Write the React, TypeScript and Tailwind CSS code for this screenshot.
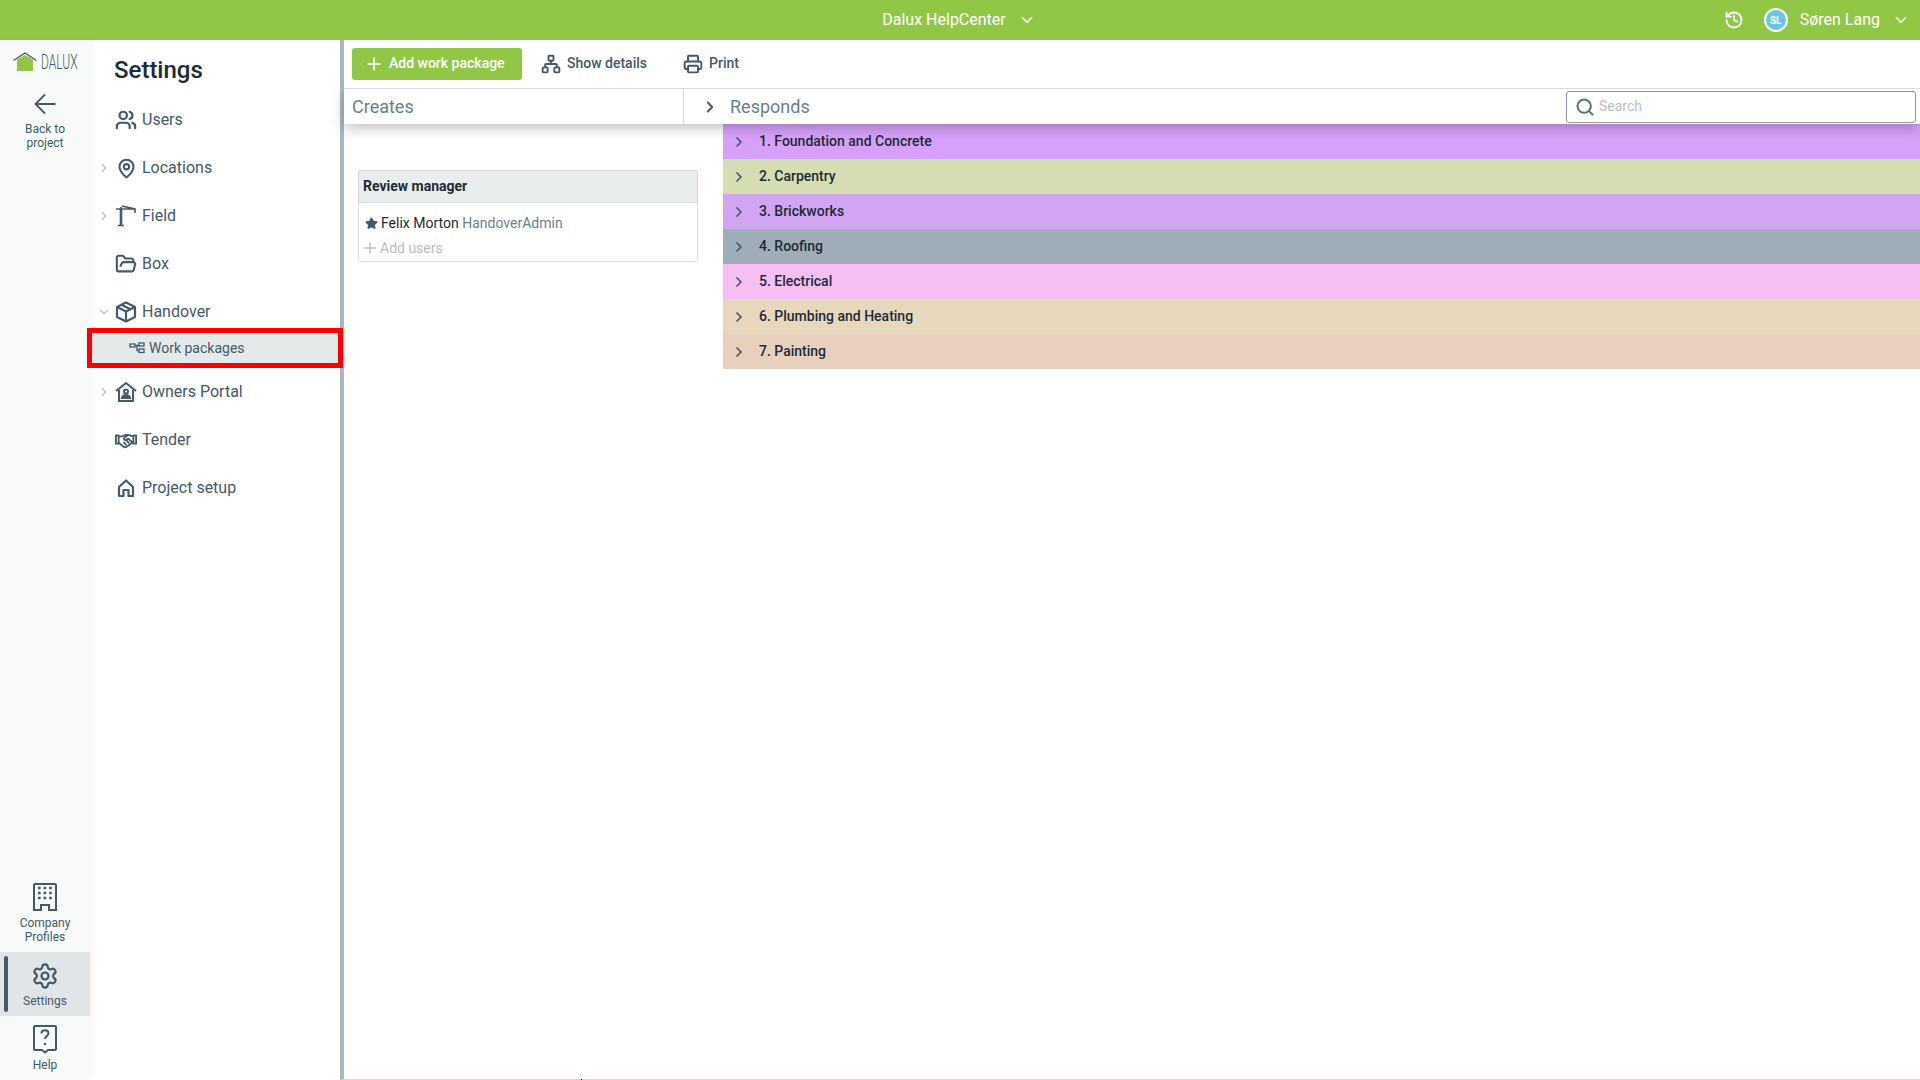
import { ChevronDown, ChevronRight, FolderOpen, History, Network, Plus, Printer, Search, Settings, Star, Users, MapPin } from "lucide-react";
import type { ReactNode } from "react";

const slate = "#44596a";

function CraneIcon() {
  return (
    <svg width="22" height="22" viewBox="0 0 22 22" fill="none" stroke={slate} strokeWidth="2">
      <path d="M1 4h19M6 2v18M3 20.500h6M7 1l13 3v4" strokeWidth="1.600" />
      <path d="M6 4v16" strokeWidth="2.600" />
    </svg>
  );
}

function OwnersIcon() {
  return (
    <svg width="22" height="22" viewBox="0 0 22 22" fill="none" stroke={slate} strokeWidth="2">
      <path d="M1 10 11 2l10 8M4 9v11h14V9" />
      <circle cx="11" cy="10.500" r="2" />
      <path d="M7 17c.5-2 2-3 4-3s3.500 1 4 3z" fill={slate} />
    </svg>
  );
}

function HouseIcon() {
  return (
    <svg width="20" height="20" viewBox="0 0 20 20" fill="none" stroke={slate} strokeWidth="2.200">
      <path d="M3 9v9h4.500v-6h5v6H17V9l-7-6.500z" strokeLinejoin="round" />
    </svg>
  );
}

function BoxIcon() {
  return (
    <svg width="22" height="22" viewBox="0 0 22 22" fill="none" stroke={slate} strokeWidth="2.200" strokeLinejoin="round">
      <path d="M11 1.500 20 6v10l-9 4.500L2 16V6z" />
      <path d="M2 6l9 4.500L20 6M11 10.500v10M6.500 3.800l9 4.500" />
    </svg>
  );
}

function HandshakeIcon() {
  return (
    <svg width="24" height="18" viewBox="0 0 24 18" fill="none" stroke={slate} strokeWidth="2" strokeLinejoin="round" strokeLinecap="round">
      <path d="M1 4h3v9H1zM23 4h-3v9h3z" />
      <path d="M4 5h4l3-1.500h3l6 1.500M20 11l-7.500 5.500c-1 .5-2 .5-3 0L4 12" />
      <path d="M14 3.500 10 7c-1 1 .5 2.500 2 2l2.500-1.500 5 4.500M12 14l-2-2M15 12l-2-2" />
    </svg>
  );
}

function WorkPackagesIcon() {
  return (
    <svg width="16" height="12" viewBox="0 0 16 12" fill="none" stroke={slate} strokeWidth="1.300">
      <rect x="1" y="2" width="5" height="3" />
      <rect x="10" y="1" width="5" height="3" />
      <rect x="10" y="7" width="5" height="3.500" />
      <path d="M6 3.500h4M8 3.500v5h2" />
    </svg>
  );
}

function HelpIcon() {
  return (
    <svg width="26" height="30" viewBox="0 0 26 30" fill="none" stroke={slate} strokeWidth="2">
      <path d="M3 2h20a1 1 0 0 1 1 1v22a1 1 0 0 1-1 1h-7l-3 2.500-3-2.500H3a1 1 0 0 1-1-1V3a1 1 0 0 1 1-1z" />
      <path d="M9.500 9.500c0-2 1.500-3.200 3.500-3.200s3.500 1.200 3.500 3c0 2.700-3.500 2.700-3.500 5.700" />
      <circle cx="13" cy="20" r="1.200" fill={slate} stroke="none" />
    </svg>
  );
}

function CompanyIcon() {
  return (
    <svg width="26" height="30" viewBox="0 0 26 30" fill="none" stroke={slate} strokeWidth="2">
      <path d="M3 2h20a1 1 0 0 1 1 1v25h-7v-5H9v5H2V3a1 1 0 0 1 1-1z" />
      <path d="M6 6h14M6 11h14M6 16h14" strokeWidth="2.600" strokeDasharray="2.600 3" />
    </svg>
  );
}

function BackArrow() {
  return (
    <svg width="22" height="22" viewBox="0 0 22 22" fill="none" stroke={slate} strokeWidth="1.800" className="mb-[3px]">
      <path d="M21.500 11H1.500M11 1.500 1.500 11l9.500 9.500" />
    </svg>
  );
}

function Logo() {
  return (
    <div className="flex h-[22px] w-[64px] items-center gap-[4px]">
      <svg width="24" height="22" viewBox="0 0 24 22" className="shrink-0">
        <path d="M.5 9.500 12 2l11.500 7.500" fill="none" stroke={slate} strokeWidth="1.400" />
        <path d="M4 8.500 12 4l8 4.500V20H4z" fill="#92c746" />
      </svg>
      <span className="w-[36px] origin-left scale-x-[0.6] whitespace-nowrap text-[20px] leading-none font-light text-[#44596a]">DALUX</span>
    </div>
  );
}

function RailItem({ icon, label, active }: { icon: ReactNode; label: ReactNode; active?: boolean }) {
  return (
    <div className={`relative flex flex-col items-center text-center text-[12px] leading-[14px] text-[#44596a] ${active ? "bg-[#e1e5e8]" : ""}`}>
      {active && <div className="absolute left-1 top-1 bottom-1 w-1 rounded bg-[#44596a]" />}
      {icon}
      <div className="mt-1">{label}</div>
    </div>
  );
}

function NavItem({ icon, label, arrow }: { icon: ReactNode; label: string; arrow?: "right" | "down" }) {
  return (
    <div className="flex h-12 items-center text-[16px] text-[#44596a]">
      <div className="flex w-[25px] justify-end pr-[4px] text-[#b5bdc3]">
        {arrow === "right" && <ChevronRight size={14} />}
        {arrow === "down" && <ChevronDown size={14} />}
      </div>
      <div className="flex w-[22px] justify-center">{icon}</div>
      <span className="ml-[5px]">{label}</span>
    </div>
  );
}

const rows = [
  { name: "1. Foundation and Concrete", color: "bg-[#d7a0fb]" },
  { name: "2. Carpentry", color: "bg-[#d7ddb2]" },
  { name: "3. Brickworks", color: "bg-[#d2a5f3]" },
  { name: "4. Roofing", color: "bg-[#9eadb7]" },
  { name: "5. Electrical", color: "bg-[#f6bff3]" },
  { name: "6. Plumbing and Heating", color: "bg-[#e6d7bd]" },
  { name: "7. Painting", color: "bg-[#e8cfbe]" },
];

export default function App() {
  return (
    <div className="flex h-[1080px] w-[1920px] flex-col overflow-hidden bg-white font-['Roboto',sans-serif]">
      {/* top bar */}
      <div className="grid h-10 shrink-0 grid-cols-[1fr_auto_1fr] items-center bg-[#92c746] text-[16px] text-white">
        <div />
        <div className="flex items-center gap-[12px] pr-[2px]">
          <span>Dalux HelpCenter</span>
          <ChevronDown size={18} strokeWidth={2.2} />
        </div>
        <div className="flex items-center justify-end pr-[10px]">
          <History size={20} strokeWidth={2.2} />
          <div className="ml-[20px] flex h-6 w-6 items-center justify-center rounded-full border-2 border-white bg-[#6cc5df] text-[10px] font-bold">SL</div>
          <span className="ml-[12px]">Søren Lang</span>
          <ChevronDown size={18} strokeWidth={2.2} className="ml-[12px]" />
        </div>
      </div>

      <div className="flex min-h-0 flex-1">
        {/* icon rail */}
        <div className="flex w-[90px] shrink-0 flex-col justify-between rounded-br-xl bg-[#f8f9f9] shadow-[2px_0_6px_rgba(0,0,0,0.05)]">
          <div className="flex flex-col items-center pt-[11px]">
            <Logo />
            <div className="mt-[20px]">
              <RailItem icon={<BackArrow />} label={<>Back to<br />project</>} />
            </div>
          </div>
          <div className="flex flex-col">
            <RailItem icon={<CompanyIcon />} label={<>Company<br />Profiles</>} />
            <div className="mt-[8px]">
              <RailItem active icon={<Settings size={28} strokeWidth={1.9} className="mt-[10px]" />} label={<span className="block pb-[8px]">Settings</span>} />
            </div>
            <div className="mt-[8px] pb-[8px]">
              <RailItem icon={<HelpIcon />} label="Help" />
            </div>
          </div>
        </div>

        {/* settings nav */}
        <div className="relative z-20 w-[250px] shrink-0">
          <div className="flex h-[56px] items-center pl-[24px] pt-[4px] text-[24px] font-medium text-[#1d2b36]">Settings</div>
          <NavItem icon={<Users size={22} color={slate} strokeWidth={2.4} />} label="Users" />
          <NavItem arrow="right" icon={<MapPin size={21} color={slate} strokeWidth={2.3} />} label="Locations" />
          <NavItem arrow="right" icon={<CraneIcon />} label="Field" />
          <NavItem icon={<FolderOpen size={22} color={slate} strokeWidth={2.3} />} label="Box" />
          <NavItem arrow="down" icon={<BoxIcon />} label="Handover" />
          <div className="mx-[2px] -mt-[3px] mb-[5px] flex h-[30px] items-center bg-[#e5e9ea] pl-[37px] text-[14px] text-[#44596a] outline-[5px] outline-[#ff0000]">
            <WorkPackagesIcon />
            <span className="ml-[4px]">Work packages</span>
          </div>
          <NavItem arrow="right" icon={<OwnersIcon />} label="Owners Portal" />
          <NavItem icon={<HandshakeIcon />} label="Tender" />
          <NavItem icon={<HouseIcon />} label="Project setup" />
        </div>

        {/* main */}
        <div className="relative flex min-w-0 flex-1 flex-col border-b border-l-4 border-b-[#d8dbdd] border-l-[#aeb6bd]">
          <div className="relative z-20 flex h-[49px] shrink-0 items-center border-b border-[#d9dde0] bg-white pb-px pl-2 text-[14px] text-[#44596a]">
            <div className="flex h-8 w-[170px] items-center rounded-[3px] bg-[#92c746] pl-[12px] font-medium text-white">
              <Plus size={20} strokeWidth={2} />
              <span className="ml-[5px]">Add work package</span>
            </div>
            <Network size={20} strokeWidth={2.3} className="ml-[19px]" />
            <span className="ml-[6px] font-medium">Show details</span>
            <Printer size={20} strokeWidth={2.3} className="ml-[36px]" />
            <span className="ml-[6px] font-medium">Print</span>
          </div>

          <div className="relative z-10 flex h-[35px] shrink-0 items-center bg-white text-[18px] text-[#6c7f8d] shadow-[0_4px_14px_rgba(0,0,0,0.25)]">
            <div className="flex h-full w-[340px] items-center border-r border-[#d9dde0] pl-2">Creates</div>
            <ChevronRight size={18} strokeWidth={2.4} color={slate} className="ml-[17px]" />
            <span className="ml-[11px]">Responds</span>
            <div className="ml-auto mr-1 mt-[1px] flex h-8 w-[350px] items-center rounded-[3px] border border-[#8a98a3] bg-white pb-px pl-[8px] text-[14px] text-[#b8bec3]">
              <Search size={20} color="#5b6f7e" strokeWidth={2.4} />
              <span className="ml-[4px]">Search</span>
            </div>
          </div>

          <div className="flex min-h-0 flex-1">
            <div className="w-[379px] shrink-0 pl-[14px] pr-[25px] pt-[46px]">
              <div className="h-[92px] rounded-b-[3px] border border-[#d9dde0] text-[14px]">
                <div className="flex h-[32px] items-center border-b border-[#d9dde0] bg-[#eaeded] pl-[4px] font-bold text-[#1d2b36]">Review manager</div>
                <div className="mt-[10px] flex h-[20px] items-center pl-[6px] text-[#1d2b36]">
                  <Star size={13} fill={slate} color={slate} />
                  <span className="ml-[3px]">Felix Morton</span>
                  <span className="ml-[3.500px] text-[#6c7f8d]">HandoverAdmin</span>
                </div>
                <div className="mt-[5px] flex h-[20px] items-center pl-[2px] text-[#b5bcc2]">
                  <Plus size={18} strokeWidth={1.8} />
                  <span className="ml-[1px]">Add users</span>
                </div>
              </div>
            </div>
            <div className="flex-1">
              {rows.map((r) => (
                <div key={r.name} className={`flex h-[35px] items-center pl-[8px] text-[14px] font-medium text-[#1d2b36] ${r.color}`}>
                  <ChevronRight size={16} strokeWidth={2.6} color={slate} />
                  <span className="ml-[12px]">{r.name}</span>
                </div>
              ))}
            </div>
          </div>
          {/* stray mark on the bottom edge */}
          <div className="absolute -bottom-px left-[237px] h-px w-px bg-black" />
        </div>
      </div>
    </div>
  );
}
